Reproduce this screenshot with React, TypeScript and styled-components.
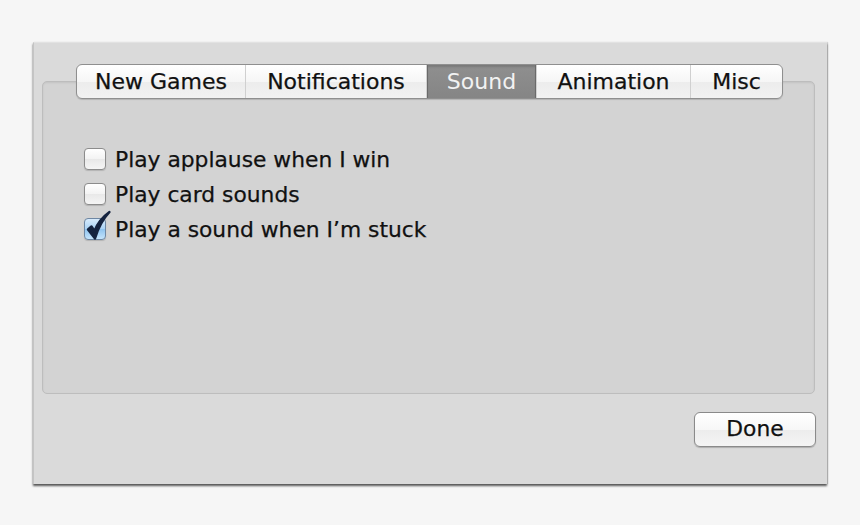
import styled, { createGlobalStyle } from 'styled-components';

const tabs = ['New Games', 'Notifications', 'Sound', 'Animation', 'Misc'];
const selectedTab = 'Sound';

const options = [
  { label: 'Play applause when I win', checked: false },
  { label: 'Play card sounds', checked: false },
  { label: 'Play a sound when I\u2019m stuck', checked: true },
];

const Global = createGlobalStyle`
  html, body {
    margin: 0;
    background: #f6f6f6;
  }
  body {
    font-family: "DejaVu Sans", "Liberation Sans", sans-serif;
  }
`;

const Page = styled.div`
  width: 860px;
  height: 525px;
  padding: 42px 0 0 33px;
  box-sizing: border-box;
`;

const Window = styled.div`
  width: 794px;
  height: 442px;
  box-sizing: border-box;
  display: flex;
  flex-direction: column;
  padding: 21px 12px 0 8px;
  background: #dadada;
  border-left: 1px solid #c4c4c4;
  border-top: 1px solid #e2e2e2;
  box-shadow: 0 2px 2px rgba(0, 0, 0, 0.65), 1px 0 1px rgba(0, 0, 0, 0.12);
`;

const TabRow = styled.div`
  display: flex;
  justify-content: center;
  padding-left: 2px;
  position: relative;
  z-index: 1;
`;

const TabBar = styled.div`
  display: flex;
  height: 35px;
  box-sizing: border-box;
  border: 1px solid #8f8f8f;
  border-radius: 6px;
  overflow: hidden;
  background: linear-gradient(#ffffff, #f6f6f6 50%, #ececec 51%, #f2f2f2);
  box-shadow: 0 1px 1px rgba(0, 0, 0, 0.15);
`;

const Tab = styled.div<{ $active?: boolean; $w: number }>`
  width: ${(p) => p.$w}px;
  box-sizing: border-box;
  display: flex;
  align-items: center;
  justify-content: center;
  font-size: 22px;
  -webkit-text-stroke: ${(p) => (p.$active ? '0' : '0.25px')} currentColor;
  color: ${(p) => (p.$active ? '#f2f2f2' : '#111')};
  background: ${(p) => (p.$active ? 'linear-gradient(#8f8f8f, #858585)' : 'transparent')};
  box-shadow: ${(p) => (p.$active ? 'inset 1px 0 0 #6a6a6a, inset -1px 0 0 #6a6a6a, inset 0 2px 2px rgba(0,0,0,0.15)' : 'none')};
  padding-bottom: 1px;
  & + & {
    border-left: ${(p) => (p.$active ? 'none' : '1px solid #d0d0d0')};
  }
`;

const Panel = styled.div`
  margin-top: -18px;
  height: 313px;
  box-sizing: border-box;
  background: #d3d3d3;
  border: 1px solid #bdbdbd;
  border-radius: 5px;
  box-shadow: inset 0 1px 2px rgba(0, 0, 0, 0.08);
  padding: 66px 0 0 41px;
  display: flex;
  flex-direction: column;
  gap: 13px;
`;

const Row = styled.label`
  display: flex;
  align-items: center;
  gap: 9px;
  height: 22px;
  font-size: 21.8px;
  -webkit-text-stroke: 0.25px currentColor;
  color: #111;
`;

const Box = styled.span<{ $checked?: boolean }>`
  width: 22px;
  height: 22px;
  box-sizing: border-box;
  border-radius: 4px;
  border: 1px solid ${(p) => (p.$checked ? '#6e87a3' : '#8c8c8c')};
  background: ${(p) =>
    p.$checked
      ? 'linear-gradient(#d8ebfc, #a9d2f5 50%, #8ec3ef 51%, #c4e4fc)'
      : 'linear-gradient(#ffffff, #f3f3f3 50%, #e8e8e8 51%, #f5f5f5)'};
  box-shadow: 0 1px 1px rgba(0, 0, 0, 0.15);
  position: relative;
  flex: none;
`;

const Check = styled.svg`
  position: absolute;
  left: 2px;
  top: -8px;
  overflow: visible;
`;

const Footer = styled.div`
  display: flex;
  justify-content: flex-end;
  padding-top: 18px;
`;

const Button = styled.button`
  width: 122px;
  height: 35px;
  margin-right: -1px;
  border: 1px solid #8a8a8a;
  border-radius: 6px;
  background: linear-gradient(#ffffff, #f7f7f7 50%, #ececec 51%, #f4f4f4);
  box-shadow: 0 1px 1px rgba(0, 0, 0, 0.2);
  font-family: "DejaVu Sans", "Liberation Sans", sans-serif;
  font-size: 21.8px;
  -webkit-text-stroke: 0.25px currentColor;
  color: #111;
  padding: 0 0 2px;
`;

const widths: Record<string, number> = {
  'New Games': 168,
  Notifications: 181,
  Sound: 110,
  Animation: 154,
  Misc: 92,
};

export default function App() {
  return (
    <>
      <Global />
      <Page>
        <Window>
          <TabRow>
            <TabBar>
              {tabs.map((t) => (
                <Tab key={t} $w={widths[t]} $active={t === selectedTab}>
                  {t}
                </Tab>
              ))}
            </TabBar>
          </TabRow>
          <Panel>
            {options.map((o) => (
              <Row key={o.label}>
                <Box $checked={o.checked}>
                  {o.checked && (
                    <Check width="22" height="30" viewBox="0 0 22 30">
                      <path
                        d="M1 18.5 L8 27.5 C10.5 19 14 10 22.5 1 C13.5 7.5 9.5 14.5 7.5 20 L4.5 15.5 Z"
                        fill="#15233f"
                        stroke="#15233f"
                        strokeWidth="2.4"
                        strokeLinejoin="round"
                      />
                    </Check>
                  )}
                </Box>
                {o.label}
              </Row>
            ))}
          </Panel>
          <Footer>
            <Button>Done</Button>
          </Footer>
        </Window>
      </Page>
    </>
  );
}
